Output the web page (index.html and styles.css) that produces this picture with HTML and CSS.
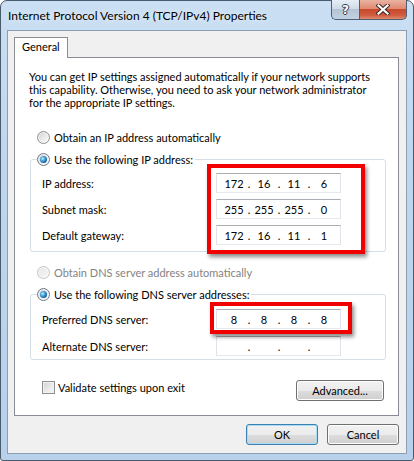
FILE: index.html
```html
<!DOCTYPE html>
<html>
<head>
<meta charset="utf-8">
<link rel="stylesheet" href="styles.css">
</head>
<body>
<div class="window">
  <div class="titlebar">
    <div class="title">Internet Protocol Version 4 (TCP/IPv4) Properties</div>
    <div class="caption-btns">
      <div class="cbtn help"><span class="qmark">?</span></div>
      <div class="cbtn close">
        <svg width="14" height="11" viewBox="0 0 14 11">
          <path d="M2.5 1.5 L11.5 9.5 M11.5 1.5 L2.5 9.5" stroke="#3a2a26" stroke-width="4.2" stroke-linecap="square"/>
          <path d="M2.5 1.5 L11.5 9.5 M11.5 1.5 L2.5 9.5" stroke="#ffffff" stroke-width="2.2" stroke-linecap="square"/>
        </svg>
      </div>
    </div>
  </div>
  <div class="client">
    <div class="tabs"><div class="tab">General</div></div>
    <div class="panel">
      <p class="intro">You can get IP settings assigned automatically if your network supports<br>this capability. Otherwise, you need to ask your network administrator<br>for the appropriate IP settings.</p>

      <div class="opt"><span class="radio"></span>Obtain an IP address automatically</div>

      <div class="group g1">
        <div class="group-head"><span class="radio on"></span>Use the following IP address:</div>
        <div class="row"><span class="lbl">IP address:</span>
          <div class="ip"><span class="oct">172</span><span class="dot">.</span><span class="oct">16</span><span class="dot">.</span><span class="oct">11</span><span class="dot">.</span><span class="oct">6</span></div>
        </div>
        <div class="row"><span class="lbl">Subnet mask:</span>
          <div class="ip"><span class="oct">255</span><span class="dot">.</span><span class="oct">255</span><span class="dot">.</span><span class="oct">255</span><span class="dot">.</span><span class="oct">0</span></div>
        </div>
        <div class="row"><span class="lbl">Default gateway:</span>
          <div class="ip"><span class="oct">172</span><span class="dot">.</span><span class="oct">16</span><span class="dot">.</span><span class="oct">11</span><span class="dot">.</span><span class="oct">1</span></div>
        </div>
      </div>

      <div class="opt disabled"><span class="radio"></span>Obtain DNS server address automatically</div>

      <div class="group g2">
        <div class="group-head"><span class="radio on"></span>Use the following DNS server addresses:</div>
        <div class="row"><span class="lbl">Preferred DNS server:</span>
          <div class="ip"><span class="oct">8</span><span class="dot">.</span><span class="oct">8</span><span class="dot">.</span><span class="oct">8</span><span class="dot">.</span><span class="oct">8</span></div>
        </div>
        <div class="row"><span class="lbl">Alternate DNS server:</span>
          <div class="ip"><span class="oct"></span><span class="dot">.</span><span class="oct"></span><span class="dot">.</span><span class="oct"></span><span class="dot">.</span><span class="oct"></span></div>
        </div>
      </div>

      <div class="foot">
        <div class="check"><span class="checkbox"></span>Validate settings upon exit</div>
        <button class="btn adv">Advanced...</button>
      </div>

      <div class="hl hl1"></div>
      <div class="hl hl2"></div>
    </div>
    <div class="dialog-btns">
      <button class="btn default">OK</button>
      <button class="btn">Cancel</button>
    </div>
  </div>
</div>
</body>
</html>
```
FILE: styles.css
```css
* { box-sizing: border-box; }
html, body { margin: 0; padding: 0; }
body {
  width: 414px;
  height: 461px;
  overflow: hidden;
  background: #fff;
  font-family: "Lato", "Noto Sans", sans-serif;
  font-size: 11px;
  color: #000;
}

.window {
  width: 414px;
  height: 461px;
  border: 1px solid #4a5b6e;
  border-radius: 7px 7px 3px 3px;
  background: linear-gradient(180deg, #cadff3 0%, #bfd6ee 35%, #b8d0ea 100%);
  padding: 0 6px 6px;
  display: flex;
  flex-direction: column;
}

.titlebar {
  height: 29px;
  display: flex;
  justify-content: space-between;
  align-items: flex-start;
}
.title {
  padding: 7px 0 0 1px;
  font-size: 12px;
  line-height: 15px;
  text-shadow: 0 0 6px rgba(255,255,255,0.9);
}
.caption-btns {
  display: flex;
  margin-top: -1px;
}
.cbtn {
  height: 20px;
  display: flex;
  align-items: center;
  justify-content: center;
  border: 1px solid #4f5f71;
  border-top: 0;
}
.help {
  width: 28px;
  border-right: 0;
  border-radius: 0 0 0 5px;
  background: linear-gradient(180deg, #e6eef6 0%, #d0dce8 45%, #b4c4d5 50%, #c2d2e2 100%);
}
.qmark {
  color: #fff;
  font-family: "DejaVu Sans", sans-serif;
  font-weight: bold;
  font-size: 12px;
  line-height: 12px;
  text-shadow: 1px 0 0 #2f3d4c, -1px 0 0 #2f3d4c, 0 1px 0 #2f3d4c, 0 -1px 0 #2f3d4c;
}
.close {
  width: 48px;
  border-radius: 0 0 5px 0;
  background: linear-gradient(180deg, #eab2a2 0%, #df8a71 45%, #c94a2d 50%, #cf5b3f 80%, #e08a6c 100%);
}

.client {
  flex: 1;
  border: 1px solid #8b9eb3;
  background: #f0f0f0;
  padding: 6px 7px 8px 6px;
  display: flex;
  flex-direction: column;
}

.tabs { display: flex; }
.tab {
  width: 54px;
  height: 21px;
  border: 1px solid #898c95;
  border-bottom: 0;
  background: #fff;
  padding-left: 7px;
  line-height: 18px;
  position: relative;
  z-index: 1;
  margin-bottom: -1px;
}

.panel {
  height: 359px;
  border: 1px solid #898c95;
  background: #fff;
  position: relative;
  padding-top: 12px;
}

.intro {
  margin: 0 0 21px 14px;
  line-height: 13px;
  white-space: nowrap;
}

.opt {
  display: flex;
  align-items: center;
  height: 15px;
  line-height: 15px;
  margin-left: 22px;
}
.opt.disabled {
  margin-top: 13px;
  color: #838383;
}

.radio {
  width: 13px;
  height: 13px;
  border-radius: 50%;
  border: 1px solid #8e8f8f;
  background: linear-gradient(135deg, #cfcfcf 0%, #e9e9e9 50%, #fbfbfb 100%);
  box-shadow: inset 0 0 0 1px rgba(255,255,255,0.6);
  margin-right: 4px;
  position: relative;
  flex: none;
}
.opt.disabled .radio {
  border-color: #c4c4c4;
  background: linear-gradient(135deg, #e6e6e6, #f7f7f7);
}
.radio.on {
  border-color: #6e7a86;
}
.radio.on::after {
  content: "";
  position: absolute;
  left: 2px;
  top: 2px;
  width: 7px;
  height: 7px;
  border-radius: 50%;
  background: radial-gradient(circle at 38% 38%, #c8f0ff 0%, #52b0e4 30%, #1b6aa5 65%, #0c3f6e 100%);
}

.group {
  width: 356px;
  margin: 14px 0 0 15px;
  border: 1px solid #d5dfe5;
  border-radius: 3px;
  padding: 0 11px 6px;
}
.group.g2 { padding-bottom: 3px; }
.group-head {
  display: flex;
  align-items: center;
  width: max-content;
  height: 15px;
  line-height: 15px;
  margin: -8px 0 0 -5px;
  padding-right: 2px;
  background: #fff;
}

.row {
  display: flex;
  align-items: center;
  height: 20px;
  margin-top: 6px;
}
.g2 .row { margin-top: 7px; }
.lbl { width: 174px; flex: none; }

.ip {
  width: 125px;
  height: 20px;
  border: 1px solid;
  border-color: #abadb3 #e2e3ea #e3e9ef #e2e3ea;
  display: flex;
  align-items: center;
  padding-left: 5px;
  background: #fff;
}
.oct { width: 24px; text-align: center; }
.dot { width: 6px; text-align: center; }

.foot {
  display: flex;
  justify-content: space-between;
  align-items: flex-start;
  margin: 20px 14px 0 27px;
}
.check {
  display: flex;
  align-items: center;
  height: 15px;
  line-height: 15px;
}
.checkbox {
  width: 13px;
  height: 13px;
  border: 1px solid #8e8f8f;
  background: linear-gradient(135deg, #d0d0d0 0%, #ececec 60%, #f8f8f8 100%);
  box-shadow: inset 0 0 0 1px #f2f2f2;
  margin-right: 3px;
  flex: none;
}

.btn {
  height: 21px;
  width: 72px;
  font: inherit;
  color: #000;
  padding: 0;
  border: 1px solid #707070;
  border-radius: 3px;
  background: linear-gradient(180deg, #f2f2f2 0%, #ebebeb 50%, #dddddd 51%, #cfcfcf 100%);
  box-shadow: inset 0 0 0 1px #fcfcfc;
}
.btn.adv { width: 88px; }
.btn.default {
  border-color: #3c7fb1;
  box-shadow: inset 0 0 0 1px #a8dbf5;
}

.dialog-btns {
  display: flex;
  justify-content: flex-end;
  gap: 9px;
  margin-top: 8px;
}

.hl {
  position: absolute;
  border: 4px solid #f20000;
  box-shadow: 2px 3px 4px rgba(0,0,0,0.45);
}
.hl1 { left: 192px; top: 106px; width: 158px; height: 90px; }
.hl2 { left: 195px; top: 244px; width: 142px; height: 32px; }
```
